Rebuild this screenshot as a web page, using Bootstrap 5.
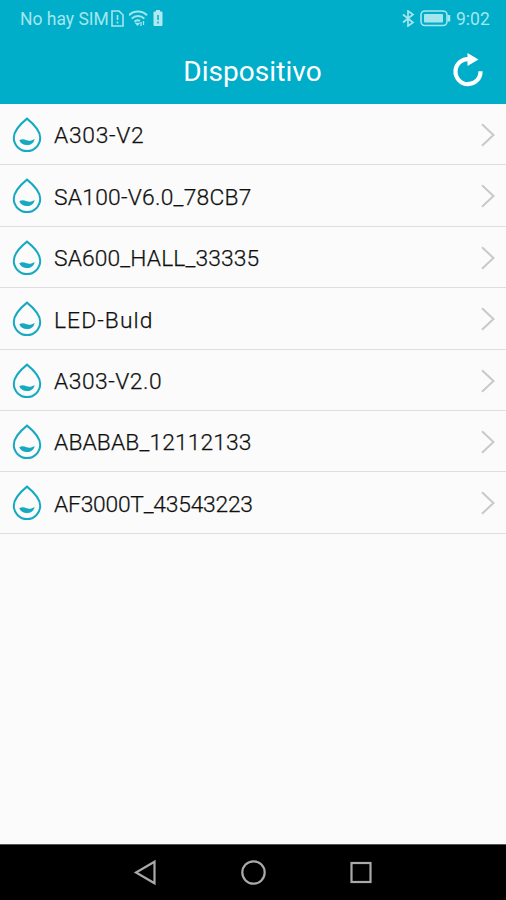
<!DOCTYPE html>
<html lang="es">
<head>
<meta charset="utf-8">
<meta name="viewport" content="width=device-width, initial-scale=1">
<title>Dispositivo</title>
<link href="https://cdn.jsdelivr.net/npm/bootstrap@5.3.0/dist/css/bootstrap.min.css" rel="stylesheet">
<style>
:root{--teal:#00aeca}
body{font-family:Roboto,"Noto Sans",sans-serif;background:#fbfbfb;height:900px;overflow:hidden}
svg{display:block;flex:none}
.app-top{background:var(--teal);height:104px}
.status{height:36px;color:#a5e6ee;font-size:17.5px;line-height:36px;padding:1px 16px 0 20px}
.status .carrier{width:90px}
.status .clock{width:34px}
.title-row{height:68px;padding:0 22px 0 54px}
.title-row h1{font-size:28px;line-height:34px;letter-spacing:.05px;padding:3px 1px 0 0}
.list-group .device.list-group-item{height:61.4px;padding:1.5px 10px 0 12px;border:0;border-bottom:1.5px solid #dedede;background:transparent;color:#101010;font-size:22.8px;font-weight:300;line-height:30px}
.device .label{margin-left:12px;padding-top:3px;-webkit-text-stroke:.25px #101010}
.sp-a{letter-spacing:.7px}
.sp-b{letter-spacing:.25px}
.sp-c{letter-spacing:.13px}
.sp-d{letter-spacing:1.1px}
.sp-e{letter-spacing:.5px}
.sp-f{letter-spacing:-.22px}
.softkeys{height:56px;background:#000;border-top:1px solid #555}
</style>
<script src="https://cdn.jsdelivr.net/npm/bootstrap@5.3.0/dist/js/bootstrap.bundle.min.js" defer></script>
</head>
<body class="d-flex flex-column">
<svg width="0" height="0" class="position-absolute" aria-hidden="true">
  <symbol id="drop" viewBox="0 0 30 36"><path d="M15 1.600C10.500 5.200 1.800 12.500 1.800 20.800a13.200 13.300 0 0 0 26.400 0C28.200 12.500 19.500 5.200 15 1.600Z" fill="none" stroke="#16a9c2" stroke-width="2"/><path d="M7.300 23.300c2.500-1.800 4.800-1 7.300-.1 2.900 1 5.200.4 8-1.300-.7 4-3.700 6.200-7.500 6.200-3.900 0-6.800-1.800-7.800-4.800Z" fill="#16a9c2"/></symbol>
  <symbol id="chev" viewBox="0 0 16 26"><path d="M2 2.200 13.500 13 2 23.800" fill="none" stroke="#c9c9c9" stroke-width="2"/></symbol>
</svg>
<header class="app-top">
  <div class="status d-flex align-items-center">
    <span class="carrier text-nowrap">No hay SIM</span>
    <svg class="me-1" width="15" height="17" viewBox="0 0 15 17" fill="none" stroke="#a5e6ee" stroke-width="1.600"><path d="M2 1h7l4 4v11H2ZM7.500 5v5M7.500 11.500v2"/></svg>
    <svg width="20" height="17" viewBox="1 0 20 17" fill="none" stroke="#a5e6ee" stroke-width="2"><path d="M1 5.200a13 13 0 0 1 18 0M3.700 8.600a9 9 0 0 1 12.600 0M6.500 11.800a5 5 0 0 1 5.500-1"/><path d="M8 13.300h3L9.500 15ZM13 12v4M15.500 11v4" stroke-width="1.300"/></svg>
    <svg class="ms-1" width="10" height="17" viewBox="0 0 10 17"><path d="M3 0h4v1.500h1.500q1 0 1 1V15q0 1-1 1h-7q-1 0-1-1V2.500q0-1 1-1H3Z" fill="#b0eaf0"/><path d="M5 5v5M5 11.500v2" stroke="#00aeca" stroke-width="1.500"/></svg>
    <svg class="ms-auto" width="14" height="17" viewBox="0 0 14 17" fill="none" stroke="#a5e6ee" stroke-width="1.700"><path d="m1 4.500 10 8L6 16V1l5 3.500-10 8"/></svg>
    <svg class="ms-1 me-1" width="32" height="17" viewBox="0 0 32 17"><rect x="1" y="1" width="26" height="14.500" rx="4" fill="none" stroke="#a5e6ee" stroke-width="1.600"/><rect x="4" y="4" width="19" height="8.500" rx="1" fill="#a5e6ee"/><path d="M29 5v6.500" stroke="#a5e6ee" stroke-width="2.500"/></svg>
    <span class="clock text-nowrap">9:02</span>
  </div>
  <div class="title-row d-flex align-items-center">
    <h1 class="flex-grow-1 text-center text-white fw-normal m-0">Dispositivo</h1>
    <svg width="32" height="34" viewBox="0 0 32 34"><path d="M17.500 6.200A12.500 12.500 0 1 0 28.500 18.200" fill="none" stroke="#fff" stroke-width="4.200"/><path d="M15.500 0 26.500 6.500 15.500 13Z" fill="#fff"/></svg>
  </div>
</header>
<main class="flex-grow-1">
  <div class="list-group list-group-flush">
    <a class="device list-group-item d-flex align-items-center"><svg width="30" height="36"><use href="#drop"/></svg><span class="label sp-a">A303-V2</span><svg class="ms-auto" width="16" height="26"><use href="#chev"/></svg></a>
    <a class="device list-group-item d-flex align-items-center"><svg width="30" height="36"><use href="#drop"/></svg><span class="label sp-b">SA100-V6.0_78CB7</span><svg class="ms-auto" width="16" height="26"><use href="#chev"/></svg></a>
    <a class="device list-group-item d-flex align-items-center"><svg width="30" height="36"><use href="#drop"/></svg><span class="label sp-c">SA600_HALL_33335</span><svg class="ms-auto" width="16" height="26"><use href="#chev"/></svg></a>
    <a class="device list-group-item d-flex align-items-center"><svg width="30" height="36"><use href="#drop"/></svg><span class="label sp-d">LED-Buld</span><svg class="ms-auto" width="16" height="26"><use href="#chev"/></svg></a>
    <a class="device list-group-item d-flex align-items-center"><svg width="30" height="36"><use href="#drop"/></svg><span class="label sp-e">A303-V2.0</span><svg class="ms-auto" width="16" height="26"><use href="#chev"/></svg></a>
    <a class="device list-group-item d-flex align-items-center"><svg width="30" height="36"><use href="#drop"/></svg><span class="label sp-c">ABABAB_12112133</span><svg class="ms-auto" width="16" height="26"><use href="#chev"/></svg></a>
    <a class="device list-group-item d-flex align-items-center"><svg width="30" height="36"><use href="#drop"/></svg><span class="label sp-f">AF3000T_43543223</span><svg class="ms-auto" width="16" height="26"><use href="#chev"/></svg></a>
  </div>
</main>
<footer class="softkeys d-flex justify-content-center align-items-center">
  <svg width="240" height="28" viewBox="0 0 240 28" fill="none" stroke="#a9a9a9" stroke-width="2.200"><path d="M21.500 2.700v21.600L3 13.500Z"/><circle cx="120.500" cy="13.500" r="11.200"/><rect x="218.500" y="4" width="19" height="19"/></svg>
</footer>
</body>
</html>
